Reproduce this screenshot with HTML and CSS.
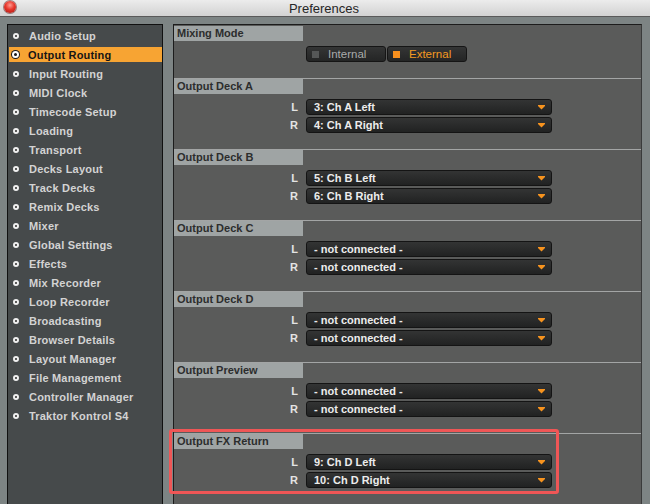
FILE: index.html
```html
<!DOCTYPE html>
<html lang="en">
<head>
    <meta charset="UTF-8">
    <title>Preferences</title>
    <link rel="stylesheet" href="styles.css">
</head>
<body>

    <div class="titlebar">
        <span class="close-btn"></span>
        <span class="title">Preferences</span>
    </div>

    <div class="window-body">
        <!-- Left: category list -->
        <ul class="sidebar">
            <li><span class="dot"></span>Audio Setup</li>
            <li class="selected"><span class="dot"></span>Output Routing</li>
            <li><span class="dot"></span>Input Routing</li>
            <li><span class="dot"></span>MIDI Clock</li>
            <li><span class="dot"></span>Timecode Setup</li>
            <li><span class="dot"></span>Loading</li>
            <li><span class="dot"></span>Transport</li>
            <li><span class="dot"></span>Decks Layout</li>
            <li><span class="dot"></span>Track Decks</li>
            <li><span class="dot"></span>Remix Decks</li>
            <li><span class="dot"></span>Mixer</li>
            <li><span class="dot"></span>Global Settings</li>
            <li><span class="dot"></span>Effects</li>
            <li><span class="dot"></span>Mix Recorder</li>
            <li><span class="dot"></span>Loop Recorder</li>
            <li><span class="dot"></span>Broadcasting</li>
            <li><span class="dot"></span>Browser Details</li>
            <li><span class="dot"></span>Layout Manager</li>
            <li><span class="dot"></span>File Management</li>
            <li><span class="dot"></span>Controller Manager</li>
            <li><span class="dot"></span>Traktor Kontrol S4</li>
        </ul>

        <!-- Right: routing settings -->
        <div class="content">
            <div class="section first">
                <div class="section-title">Mixing Mode</div>
                <div class="mode-row">
                    <div class="mode-btn"><span class="led"></span>Internal</div>
                    <div class="mode-btn on"><span class="led"></span>External</div>
                </div>
            </div>

            <div class="section">
                <div class="section-title">Output Deck A</div>
                <div class="row"><span class="ch">L</span><div class="select">3: Ch A Left<svg class="arrow" width="7" height="5" viewBox="0 0 7 5"><polygon points="0,0 7,0 7,1 3.5,4.5 0,1"/></svg></div></div>
                <div class="row"><span class="ch">R</span><div class="select">4: Ch A Right<svg class="arrow" width="7" height="5" viewBox="0 0 7 5"><polygon points="0,0 7,0 7,1 3.5,4.5 0,1"/></svg></div></div>
            </div>

            <div class="section">
                <div class="section-title">Output Deck B</div>
                <div class="row"><span class="ch">L</span><div class="select">5: Ch B Left<svg class="arrow" width="7" height="5" viewBox="0 0 7 5"><polygon points="0,0 7,0 7,1 3.5,4.5 0,1"/></svg></div></div>
                <div class="row"><span class="ch">R</span><div class="select">6: Ch B Right<svg class="arrow" width="7" height="5" viewBox="0 0 7 5"><polygon points="0,0 7,0 7,1 3.5,4.5 0,1"/></svg></div></div>
            </div>

            <div class="section">
                <div class="section-title">Output Deck C</div>
                <div class="row"><span class="ch">L</span><div class="select">- not connected -<svg class="arrow" width="7" height="5" viewBox="0 0 7 5"><polygon points="0,0 7,0 7,1 3.5,4.5 0,1"/></svg></div></div>
                <div class="row"><span class="ch">R</span><div class="select">- not connected -<svg class="arrow" width="7" height="5" viewBox="0 0 7 5"><polygon points="0,0 7,0 7,1 3.5,4.5 0,1"/></svg></div></div>
            </div>

            <div class="section">
                <div class="section-title">Output Deck D</div>
                <div class="row"><span class="ch">L</span><div class="select">- not connected -<svg class="arrow" width="7" height="5" viewBox="0 0 7 5"><polygon points="0,0 7,0 7,1 3.5,4.5 0,1"/></svg></div></div>
                <div class="row"><span class="ch">R</span><div class="select">- not connected -<svg class="arrow" width="7" height="5" viewBox="0 0 7 5"><polygon points="0,0 7,0 7,1 3.5,4.5 0,1"/></svg></div></div>
            </div>

            <div class="section">
                <div class="section-title">Output Preview</div>
                <div class="row"><span class="ch">L</span><div class="select">- not connected -<svg class="arrow" width="7" height="5" viewBox="0 0 7 5"><polygon points="0,0 7,0 7,1 3.5,4.5 0,1"/></svg></div></div>
                <div class="row"><span class="ch">R</span><div class="select">- not connected -<svg class="arrow" width="7" height="5" viewBox="0 0 7 5"><polygon points="0,0 7,0 7,1 3.5,4.5 0,1"/></svg></div></div>
            </div>

            <div class="section">
                <div class="section-title">Output FX Return</div>
                <div class="row"><span class="ch">L</span><div class="select">9: Ch D Left<svg class="arrow" width="7" height="5" viewBox="0 0 7 5"><polygon points="0,0 7,0 7,1 3.5,4.5 0,1"/></svg></div></div>
                <div class="row"><span class="ch">R</span><div class="select">10: Ch D Right<svg class="arrow" width="7" height="5" viewBox="0 0 7 5"><polygon points="0,0 7,0 7,1 3.5,4.5 0,1"/></svg></div></div>
            </div>
        </div>
    </div>

    <!-- annotation box around FX Return -->
    <div class="callout"></div>

</body>
</html>
```

FILE: styles.css
```css
body {
    margin: 0;
    width: 650px;
    height: 504px;
    overflow: hidden;
    position: relative;
    background-color: #7d8484;
    font-family: "Liberation Sans", Arial, sans-serif;
    font-size: 11px;
    font-weight: bold;
}
.titlebar {
    height: 16px;
    border-bottom: 1px solid #5a5a5a;
    background: linear-gradient(#ececec, #d2d2d2);
    display: flex;
    align-items: center;
    justify-content: center;
    position: relative;
}
.title {
    font-size: 13px;
    font-weight: normal;
    color: #262626;
    margin-left: -2px;
}
.close-btn {
    position: absolute;
    left: 4px;
    top: 1px;
    width: 12px;
    height: 12px;
    border-radius: 50%;
    background: radial-gradient(circle at 50% 35%, #ff9a90 0%, #e8372c 45%, #a5140e 100%);
    box-shadow: 0 0 0 1px rgba(90, 20, 20, 0.5);
}
.window-body {
    display: flex;
    gap: 10px;
    padding: 7px 8px 0 7px;
    height: 480px;
}

/* sidebar */
.sidebar {
    list-style: none;
    margin: 0;
    padding: 3px 0 0 0;
    width: 156px;
    box-sizing: border-box;
    border: 1px solid #111;
    border-bottom: none;
    background-color: #464a4b;
}
.sidebar li {
    display: flex;
    align-items: center;
    height: 15px;
    margin: 0 0 4px 1px;
    color: #d3d3d3;
    letter-spacing: 0.2px;
}
.sidebar .dot {
    width: 2px;
    height: 2px;
    border: 2px solid #f0f0f0;
    border-radius: 50%;
    background-color: #2a2a2a;
    margin: 0 10px 0 4px;
}
.sidebar li.selected {
    background-color: #f7a433;
    color: #151515;
}
.sidebar li.selected .dot {
    width: 3px;
    height: 3px;
    border-color: #ffffff;
    background-color: #1a1a1a;
    box-shadow: 0 0 0 1px #1a1a1a;
    margin: 0 9px 0 3px;
}

/* right panel */
.content {
    flex: 1;
    box-sizing: border-box;
    padding-top: 1px;
    background-color: #5a5b5a;
    border-top: 1px solid #1c1c1c;
    border-left: 1px solid #1c1c1c;
    border-right: 1px solid #3a3b3b;
}
.section {
    border-top: 1px solid #a3a5a5;
    padding-bottom: 16px;
}
.section.first {
    border-top: none;
}
.section-title {
    width: 126px;
    height: 15px;
    line-height: 15px;
    padding-left: 3px;
    background-color: #9fa4a4;
    color: #2c2d2d;
    margin-bottom: 5px;
}
.mode-row {
    display: flex;
    gap: 1px;
    padding-left: 132px;
}
.mode-btn {
    width: 80px;
    height: 16px;
    box-sizing: border-box;
    display: flex;
    align-items: center;
    border: 1px solid #151515;
    border-radius: 3px;
    background: linear-gradient(#343535, #242525);
    color: #a9abab;
    font-weight: normal;
    font-size: 11.5px;
}
.mode-btn .led {
    width: 7px;
    height: 7px;
    background-color: #555757;
    margin: 0 9px 0 5px;
}
.mode-btn.on {
    color: #f39a22;
}
.mode-btn.on .led {
    background-color: #f7901e;
}
.row {
    display: flex;
    align-items: center;
    gap: 8px;
    margin-bottom: 2px;
}
.row:last-child {
    margin-bottom: 0;
}
.ch {
    width: 124px;
    text-align: right;
    color: #e4e4e4;
}
.select {
    width: 246px;
    height: 16px;
    box-sizing: border-box;
    display: flex;
    align-items: center;
    justify-content: space-between;
    padding: 0 6px 0 7px;
    border: 1px solid #141414;
    border-radius: 3px;
    background: linear-gradient(#333434, #212222);
    color: #ececec;
}
.arrow {
    fill: #f7931e;
}
.callout {
    position: absolute;
    left: 169px;
    top: 429px;
    width: 384px;
    height: 59px;
    border: 3px solid #ef5656;
    border-radius: 3px;
}
```
